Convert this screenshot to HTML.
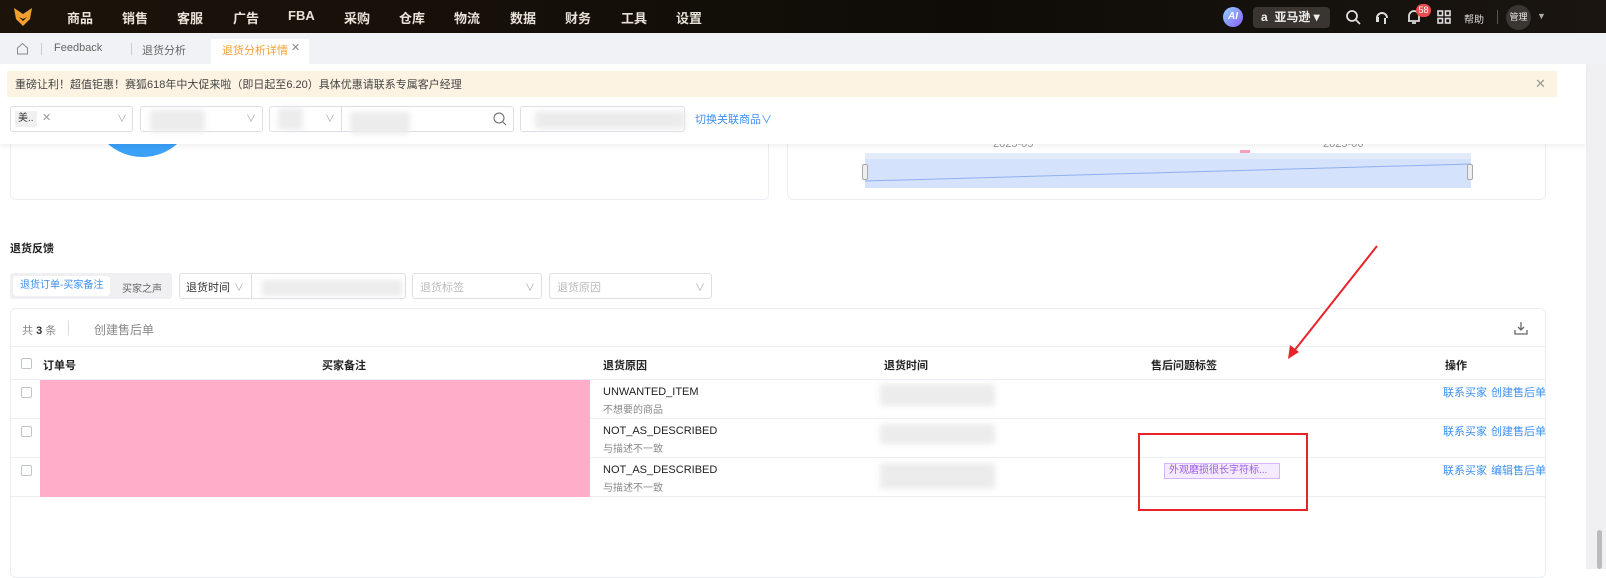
<!DOCTYPE html>
<html><head><meta charset="utf-8"><style>
*{box-sizing:border-box;margin:0;padding:0}
body{width:1606px;height:569px;overflow:hidden;background:#fff;font-family:"Liberation Sans","Noto Sans CJK SC",sans-serif;font-size:12px;color:#333;position:relative}
.a{position:absolute}
.nav{left:0;top:0;width:1606px;height:33px;background:linear-gradient(90deg,#1c140a,#0f0c08 60%,#1a1510)}
.nav span.m{position:absolute;top:8px;color:#e8e2d8;font-size:13px;font-weight:bold}
.tabs{left:0;top:33px;width:1606px;height:31px;background:#f0f2f5}
.box{position:absolute;border:1px solid #dcdfe6;border-radius:3px;background:#fff;height:26px}
.blur{position:absolute;background:#ececec;filter:blur(3px)}
.th{position:absolute;top:357px;font-weight:bold;font-size:11px;color:#222}
.cb{position:absolute;width:11px;height:11px;border:1px solid #c0c4cc;border-radius:2px;background:#fff}
.lk{position:absolute;color:#3d8ff0;font-size:11px}
.rl{position:absolute;left:10px;width:1535px;height:1px;background:#ebeef5}
</style></head><body>
<div class="a nav">
 <svg class="a" style="left:12px;top:6px" width="22" height="22" viewBox="0 0 22 22"><path d="M2 2 L11 8 L20 2 L18 13 L11 20 L4 13Z" fill="#f0a030"/><path d="M7 11 L11 15 L15 11 L11 13Z" fill="#1a130a"/></svg>
 <span class="m" style="left:67px">商品</span><span class="m" style="left:122px">销售</span><span class="m" style="left:177px">客服</span><span class="m" style="left:233px">广告</span><span class="m" style="left:288px">FBA</span><span class="m" style="left:344px">采购</span><span class="m" style="left:399px">仓库</span><span class="m" style="left:454px">物流</span><span class="m" style="left:510px">数据</span><span class="m" style="left:565px">财务</span><span class="m" style="left:621px">工具</span><span class="m" style="left:676px">设置</span>
 <div class="a" style="left:1223px;top:7px;width:20px;height:20px;border-radius:50%;background:linear-gradient(135deg,#8fd3ff,#8a5cff);color:#fff;font-size:10px;font-weight:bold;text-align:center;line-height:20px;font-style:italic">AI</div>
 <div class="a" style="left:1253px;top:7px;width:77px;height:21px;border-radius:4px;background:#3a3530;color:#eee;font-size:12px;font-weight:bold;line-height:21px;padding-left:8px">a&nbsp; 亚马逊 ▾</div>
 <svg class="a" style="left:1345px;top:9px" width="16" height="16"><circle cx="7" cy="7" r="5" stroke="#ddd" stroke-width="1.8" fill="none"/><path d="M11 11l4 4" stroke="#ddd" stroke-width="1.8"/></svg>
 <svg class="a" style="left:1374px;top:8px" width="16" height="18"><path d="M3 10 A5 5 0 0 1 13 10" stroke="#ddd" stroke-width="2" fill="none"/><rect x="2" y="9" width="3" height="5" fill="#ddd"/><path d="M11 10v6" stroke="#ddd" stroke-width="2"/></svg>
 <svg class="a" style="left:1406px;top:9px" width="16" height="16"><path d="M3 12 V7 A5 5 0 0 1 13 7 V12 H2 M6 14 H10" stroke="#ddd" stroke-width="1.8" fill="none"/></svg>
 <div class="a" style="left:1416px;top:4px;width:15px;height:13px;border-radius:7px;background:#f04a4a;color:#fff;font-size:9px;text-align:center;line-height:13px">58</div>
 <svg class="a" style="left:1437px;top:10px" width="14" height="14"><g fill="none" stroke="#ddd" stroke-width="1.6"><rect x="1" y="1" width="4.5" height="4.5"/><rect x="8.5" y="1" width="4.5" height="4.5"/><rect x="1" y="8.5" width="4.5" height="4.5"/><rect x="8.5" y="8.5" width="4.5" height="4.5"/></g></svg>
 <span class="a" style="left:1464px;top:11px;color:#ddd;font-size:10px">帮助</span>
 <div class="a" style="left:1497px;top:10px;width:1px;height:14px;background:#555"></div>
 <div class="a" style="left:1506px;top:5px;width:25px;height:25px;border-radius:50%;background:#3a3632;color:#eee;font-size:9px;text-align:center;line-height:25px">管理</div>
 <span class="a" style="left:1537px;top:11px;color:#aaa;font-size:9px">▼</span>
</div>
<div class="a tabs">
 <svg class="a" style="left:16px;top:9px" width="13" height="13"><path d="M1.5 6 L6.5 1.5 L11.5 6 V12 H1.5Z" stroke="#888" fill="none"/></svg>
 <div class="a" style="left:41px;top:10px;width:1px;height:12px;background:#ccc"></div>
 <span class="a" style="left:54px;top:9px;color:#666;font-size:11px">Feedback</span>
 <div class="a" style="left:131px;top:10px;width:1px;height:12px;background:#ccc"></div>
 <span class="a" style="left:142px;top:9px;color:#666;font-size:11px">退货分析</span>
 <div class="a" style="left:211px;top:6px;width:98px;height:25px;background:#fff"></div>
 <span class="a" style="left:222px;top:9px;color:#f0a030;font-size:11px">退货分析详情</span>
 <span class="a" style="left:291px;top:8px;color:#888;font-size:11px">✕</span>
</div>
<div class="a" style="left:1586px;top:64px;width:20px;height:505px;background:#f0f0f2"></div>
<!-- chart cards -->
<div class="a" style="left:10px;top:120px;width:759px;height:80px;border:1px solid #ebeef5;border-radius:6px"></div>
<div class="a" style="left:90px;top:100px;width:105px;height:57px;border-radius:0 0 55px 55px;background:#3aa0f8"></div>
<div class="a" style="left:787px;top:120px;width:759px;height:80px;border:1px solid #ebeef5;border-radius:6px"></div>
<span class="a" style="left:993px;top:138px;color:#999;font-size:11px">2025-05</span>
<span class="a" style="left:1323px;top:138px;color:#999;font-size:11px">2025-06</span>
<div class="a" style="left:1240px;top:150px;width:10px;height:3px;background:#f4a0b8"></div>
<div class="a" style="left:865px;top:153px;width:606px;height:35px;background:#d4e2fb;border-top:6px solid #e3eaf8"></div>
<svg class="a" style="left:865px;top:159px" width="606" height="30"><path d="M0 22 L606 5" stroke="#8fb0ee" fill="none"/></svg>
<div class="a" style="left:862px;top:164px;width:6px;height:16px;border:1px solid #aaa;border-radius:2px;background:#eee"></div>
<div class="a" style="left:1467px;top:164px;width:6px;height:16px;border:1px solid #aaa;border-radius:2px;background:#eee"></div>
<!-- notice -->
<div class="a" style="left:0;top:64px;width:1586px;height:80px;background:#fff;box-shadow:0 3px 4px rgba(0,0,0,.05)"></div>
<div class="a" style="left:7px;top:71px;width:1550px;height:26px;background:#fdf3e3"></div>
<span class="a" style="left:15px;top:76px;font-size:11px;color:#444">重磅让利！超值钜惠！赛狐618年中大促来啦（即日起至6.20）具体优惠请联系专属客户经理</span>
<span class="a" style="left:1535px;top:76px;color:#999;font-size:13px">✕</span>
<!-- filters -->
<div class="box" style="left:10px;top:106px;width:123px"></div>
<div class="a" style="left:15px;top:111px;width:22px;height:16px;background:#f0f0f0;font-size:10px;line-height:16px;padding-left:3px">美..</div><span class="a" style="left:42px;top:111px;color:#999;font-size:11px">✕</span>
<span class="a" style="left:117px;top:110px;color:#aaa;font-size:10px">∨</span>
<div class="box" style="left:140px;top:106px;width:123px"></div><div class="blur" style="left:150px;top:110px;width:55px;height:22px"></div><span class="a" style="left:246px;top:110px;color:#aaa;font-size:10px">∨</span>
<div class="box" style="left:269px;top:106px;width:245px"></div><div class="a" style="left:341px;top:106px;width:1px;height:26px;background:#dcdfe6"></div>
<div class="blur" style="left:278px;top:108px;width:25px;height:22px"></div><span class="a" style="left:325px;top:110px;color:#aaa;font-size:10px">∨</span>
<div class="blur" style="left:350px;top:112px;width:60px;height:22px"></div>
<svg class="a" style="left:493px;top:112px" width="14" height="14"><circle cx="6" cy="6" r="5" stroke="#666" fill="none"/><path d="M10 10l3 3" stroke="#666"/></svg>
<div class="box" style="left:520px;top:106px;width:165px"></div><div class="blur" style="left:535px;top:111px;width:150px;height:18px"></div>
<span class="a" style="left:695px;top:111px;color:#3d8ff0;font-size:11px">切换关联商品∨</span>
<!-- section -->
<span class="a" style="left:10px;top:240px;font-weight:bold;font-size:11px;color:#222">退货反馈</span>
<div class="a" style="left:10px;top:273px;width:162px;height:26px;background:#f0f0f2;border-radius:3px"></div>
<div class="a" style="left:13px;top:276px;width:97px;height:20px;background:#fff;border-radius:3px;color:#3d8ff0;font-size:10px;line-height:20px;padding-left:7px">退货订单-买家备注</div>
<span class="a" style="left:122px;top:280px;font-size:10px;color:#666">买家之声</span>
<div class="box" style="left:179px;top:273px;width:227px"></div><div class="a" style="left:251px;top:273px;width:1px;height:26px;background:#dcdfe6"></div>
<span class="a" style="left:186px;top:279px;font-size:11px">退货时间</span><span class="a" style="left:234px;top:279px;color:#aaa;font-size:10px">∨</span>
<div class="blur" style="left:262px;top:280px;width:140px;height:16px"></div>
<div class="box" style="left:412px;top:273px;width:130px"></div><span class="a" style="left:420px;top:279px;color:#bbb;font-size:11px">退货标签</span><span class="a" style="left:525px;top:279px;color:#aaa;font-size:10px">∨</span>
<div class="box" style="left:549px;top:273px;width:163px"></div><span class="a" style="left:557px;top:279px;color:#bbb;font-size:11px">退货原因</span><span class="a" style="left:695px;top:279px;color:#aaa;font-size:10px">∨</span>
<!-- table -->
<div class="a" style="left:10px;top:308px;width:1536px;height:270px;border:1px solid #ebeef5;border-radius:6px"></div>
<span class="a" style="left:22px;top:322px;color:#888;font-size:11px">共 <b style="color:#333">3</b> 条</span>
<div class="a" style="left:68px;top:321px;width:1px;height:14px;background:#ddd"></div>
<span class="a" style="left:94px;top:321px;color:#888;font-size:12px">创建售后单</span>
<svg class="a" style="left:1513px;top:320px" width="16" height="16"><path d="M8 2v8M5 7l3 3 3-3M2 10v4h12v-4" stroke="#666" fill="none" stroke-width="1.3"/></svg>
<div class="rl" style="top:346px"></div>
<div class="cb" style="left:21px;top:358px"></div>
<span class="th" style="left:43px">订单号</span><span class="th" style="left:322px">买家备注</span><span class="th" style="left:603px">退货原因</span><span class="th" style="left:884px">退货时间</span><span class="th" style="left:1151px">售后问题标签</span><span class="th" style="left:1445px">操作</span>
<div class="rl" style="top:379px"></div><div class="rl" style="top:418px"></div><div class="rl" style="top:457px"></div><div class="rl" style="top:496px"></div>
<div class="cb" style="left:21px;top:387px"></div><div class="cb" style="left:21px;top:426px"></div><div class="cb" style="left:21px;top:465px"></div>
<div class="a" style="left:40px;top:380px;width:550px;height:117px;background:#ffadc8"></div>
<span class="a" style="left:603px;top:386px;font-size:11px;color:#222">UNWANTED_ITEM</span><span class="a" style="left:603px;top:401px;font-size:10px;color:#888">不想要的商品</span>
<span class="a" style="left:603px;top:425px;font-size:11px;color:#222">NOT_AS_DESCRIBED</span><span class="a" style="left:603px;top:440px;font-size:10px;color:#888">与描述不一致</span>
<span class="a" style="left:603px;top:464px;font-size:11px;color:#222">NOT_AS_DESCRIBED</span><span class="a" style="left:603px;top:479px;font-size:10px;color:#888">与描述不一致</span>
<div class="blur" style="left:880px;top:384px;width:115px;height:22px"></div>
<div class="blur" style="left:880px;top:424px;width:115px;height:20px"></div>
<div class="blur" style="left:880px;top:463px;width:115px;height:26px"></div>
<div class="a" style="left:1164px;top:463px;width:116px;height:16px;border:1px solid #d7b5fa;background:#f5ebff;color:#9b5de5;font-size:10px;line-height:14px;padding-left:4px">外观磨损很长字符标...</div>
<span class="lk" style="left:1443px;top:384px">联系买家</span><span class="lk" style="left:1491px;top:384px">创建售后单</span>
<span class="lk" style="left:1443px;top:423px">联系买家</span><span class="lk" style="left:1491px;top:423px">创建售后单</span>
<span class="lk" style="left:1443px;top:462px">联系买家</span><span class="lk" style="left:1491px;top:462px">编辑售后单</span>
<div class="a" style="left:1138px;top:433px;width:170px;height:78px;border:2px solid #e8232a"></div>
<svg class="a" style="left:1280px;top:240px" width="105" height="125"><path d="M97 6 L10 116" stroke="#e8232a" stroke-width="2"/><path d="M8 119 L10 105 L19 112Z" fill="#e8232a"/></svg>
<div class="a" style="left:1597px;top:530px;width:5px;height:39px;background:#bbb;border-radius:3px"></div>
</body></html>
